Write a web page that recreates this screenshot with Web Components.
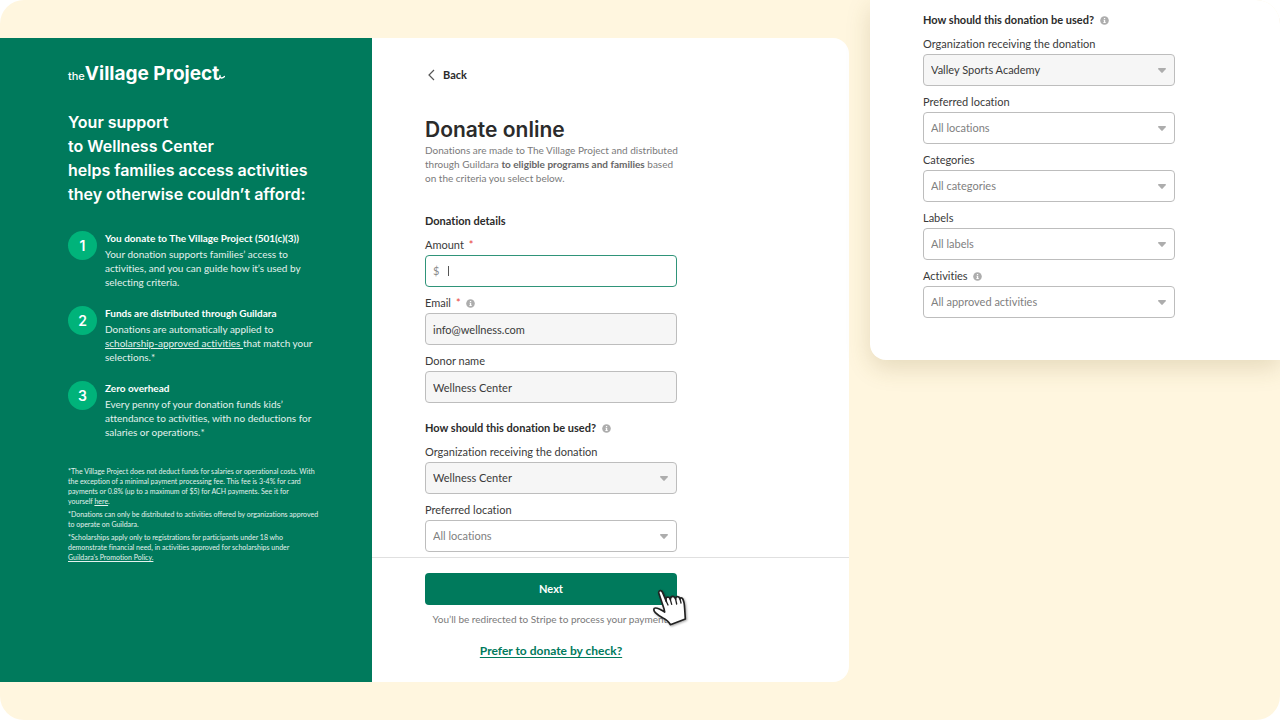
<!DOCTYPE html>
<html lang="en">
<head>
<meta charset="utf-8">
<meta name="viewport" content="width=device-width, initial-scale=1">
<title>Donate online</title>
<style>
html { background: #fff; }
body { --display: Inter, "Open Sans", sans-serif; margin: 0; font-family: Lato, "Open Sans", sans-serif; font-variant-ligatures: none; font-size: 11px; line-height: 14px; color: #3a3a3a; }
</style>
</head>
<body>
<donation-page></donation-page>

<script>
const define = (name, html, setup) => customElements.define(name, class extends HTMLElement {
  connectedCallback() {
    if (this.shadowRoot) return;
    const t = document.createElement('template');
    t.innerHTML = html;
    this.attachShadow({ mode: 'open' }).append(t.content.cloneNode(true));
    if (setup) setup(this, this.shadowRoot);
  }
});

define('info-icon', `
<style>
:host { display: inline-flex; width: 9px; height: 9px; }
svg { display: block; width: 100%; height: 100%; }
</style>
<svg viewBox="0 0 18 18" aria-hidden="true"><circle cx="9" cy="9" r="8.6" fill="#adadad"/><path d="M7.8 4h2.6v2.2H7.8zM7 7.6h3.4v4.6h1v1.6H6.8v-1.6h1V9.2H7z" fill="#fff"/></svg>`);

define('brand-logo', `
<style>
:host { display: flex; align-items: baseline; color: #fff; font-family: var(--display); line-height: 24px; white-space: nowrap; }
small { font-size: 11px; font-weight: 500; }
b { font-size: 19px; font-weight: 700; }
svg { width: 8px; height: 6px; margin-left: -2px; }
</style>
<small>the</small><b>Village Project</b>
<svg viewBox="0 0 16 12" aria-hidden="true"><path d="M1 10Q6 10 6 3Q6 8 9 8Q12 8 15 5" fill="none" stroke="#fff" stroke-width="2.6" stroke-linecap="round" stroke-linejoin="round"/></svg>`);

define('step-item', `
<style>
:host { display: flex; gap: 8px; font-size: 10px; color: #e3f1ed; white-space: nowrap; }
.num { flex: none; width: 29px; height: 29px; border-radius: 50%; background: #00b37a; color: #fff; font-family: var(--display); font-size: 14px; line-height: 29px; font-weight: 600; text-align: center; }
h3 { margin: 0 0 2px; font-size: 10px; line-height: 14px; font-weight: 700; color: #fff; }
p { margin: 0; }
</style>
<div class="num"></div>
<div><h3><slot name="title"></slot></h3><p><slot></slot></p></div>`,
(el, r) => { r.querySelector('.num').textContent = el.getAttribute('n'); });

define('promo-panel', `
<style>
:host { display: block; box-sizing: border-box; padding: 24px 24px 24px 68px; background: #007a5c; color: #fff; }
h2 { margin: 22px 0 25px; font-family: var(--display); font-size: 16px; line-height: 24px; font-weight: 600; white-space: nowrap; }
.steps { display: grid; gap: 17px; }
.notes { display: grid; gap: 3px; margin-top: 27px; font-size: 7px; line-height: 10px; color: #e3f1ed; white-space: nowrap; }
.notes p { margin: 0; }
a { color: inherit; text-decoration: underline; }
</style>
<brand-logo></brand-logo>
<h2>Your support<br>to Wellness Center<br>helps families access activities<br>they otherwise couldn’t afford:</h2>
<div class="steps">
<step-item n="1"><span slot="title">You donate to The Village Project (501(c)(3))</span>Your donation supports families’ access to<br>activities, and you can guide how it’s used by<br>selecting criteria.</step-item>
<step-item n="2"><span slot="title">Funds are distributed through Guildara</span>Donations are automatically applied to<br><a href="#activities">scholarship-approved activities </a>that match your<br>selections.*</step-item>
<step-item n="3"><span slot="title">Zero overhead</span>Every penny of your donation funds kids’<br>attendance to activities, with no deductions for<br>salaries or operations.*</step-item>
</div>
<div class="notes">
<p>*The Village Project does not deduct funds for salaries or operational costs. With<br>the exception of a minimal payment processing fee. This fee is 3-4% for card<br>payments or 0.8% (up to a maximum of $5) for ACH payments. See it for<br>yourself <a href="#fees">here</a>.</p>
<p>*Donations can only be distributed to activities offered by organizations approved<br>to operate on Guildara.</p>
<p>*Scholarships apply only to registrations for participants under 18 who<br>demonstrate financial need, in activities approved for scholarships under<br><a href="#policy">Guildara’s Promotion Policy.</a></p>
</div>`);

const fieldCss = `
:host { display: block; }
.label { display: flex; align-items: center; gap: 5px; height: 14px; margin-bottom: 3px; white-space: nowrap; }
.req { color: #e8423a; }
.box { display: flex; align-items: center; box-sizing: border-box; height: 32px; border: 1px solid #bdbdbd; border-radius: 4px; background: #fff; }
.box.filled { background: #f6f6f6; }
.box.active { border-color: #2f9479; }
input, select { flex: 1; min-width: 0; height: 100%; box-sizing: border-box; margin: 0; padding: 0 7px; border: 0; outline: 0; background: none; appearance: none; font: inherit; color: #3a3a3a; }
`;
const labelHtml = `<div class="label"><label for="control"></label><span class="req" hidden>*</span><info-icon hidden></info-icon></div>`;
const setupLabel = (el, r) => {
  r.querySelector('label').textContent = el.getAttribute('label');
  if (!el.hasAttribute('required')) r.querySelector('.req').remove(); else r.querySelector('.req').hidden = false;
  if (!el.hasAttribute('info')) r.querySelector('info-icon').remove(); else r.querySelector('info-icon').hidden = false;
};

define('text-field', `
<style>${fieldCss}
.prefix { padding-left: 7px; color: #8a8a8a; }
.caret { width: 1px; height: 10px; margin-left: 9px; background: #555; }
</style>
${labelHtml}
<div class="box"><input id="control" type="text"></div>`,
(el, r) => {
  setupLabel(el, r);
  const box = r.querySelector('.box'), input = r.querySelector('input');
  input.value = el.getAttribute('value') || '';
  input.readOnly = el.hasAttribute('readonly');
  box.classList.toggle('filled', input.readOnly);
  if (el.hasAttribute('prefix')) {
    box.classList.add('active');
    const p = document.createElement('span'), c = document.createElement('span');
    p.className = 'prefix'; p.textContent = el.getAttribute('prefix');
    c.className = 'caret';
    input.before(p, c);
  }
});

define('select-field', `
<style>${fieldCss}
.box { display: grid; align-items: center; }
select { grid-area: 1 / 1; width: 100%; padding-right: 24px; color: #808080; }
.filled select { color: #3a3a3a; }
svg { grid-area: 1 / 1; justify-self: end; margin-right: 8px; width: 8px; height: 5px; pointer-events: none; }
</style>
${labelHtml}
<div class="box"><select id="control"><option></option></select><svg viewBox="0 0 16 10" aria-hidden="true"><path d="M1.5 0h13q2.4.6.8 2.6L9.4 9.2q-1.4 1.2-2.8 0L.7 2.6Q-.9.6 1.5 0z" fill="#adadad"/></svg></div>`,
(el, r) => {
  setupLabel(el, r);
  r.querySelector('option').textContent = el.getAttribute('value');
  r.querySelector('.box').classList.toggle('filled', el.hasAttribute('filled'));
});

define('field-group', `
<style>
:host { display: block; }
h2 { display: flex; align-items: center; gap: 6px; margin: 0 0 10px; font-size: 11px; line-height: 14px; font-weight: 700; color: #2b2b2b; white-space: nowrap; }
.fields { display: grid; gap: 9px; }
</style>
<h2><span></span></h2>
<div class="fields"><slot></slot></div>`,
(el, r) => {
  r.querySelector('span').textContent = el.getAttribute('heading');
  if (el.hasAttribute('info')) r.querySelector('h2').append(document.createElement('info-icon'));
});

define('hand-pointer', `
<style>
:host { display: block; width: 36px; height: 40px; pointer-events: none; filter: drop-shadow(1px 1px 1px rgba(0,0,0,.35)); }
svg { display: block; width: 100%; height: 100%; }
</style>
<svg viewBox="0 0 108 120" aria-hidden="true">
<path d="M20 14Q21 7 26 8Q30 9 32 14L43 40Q40 28 47 27Q53 27 55 35Q55 25 62 25Q68 25 71 34Q71 25 77 26Q82 26 84 33Q86 27 91 31Q97 40 98 62L100 93L55 110Q49 98 33 90Q18 82 10 74Q3 67 7 61Q13 56 38 72L36 62Z" fill="#fff" stroke="#222" stroke-width="5" stroke-linejoin="round"/>
<path d="M42 38l6 13M55 35l4 14M71 34l3 14M84 33l3 12" fill="none" stroke="#222" stroke-width="4" stroke-linecap="round"/>
</svg>`);

define('donate-form', `
<style>
:host { display: flex; flex-direction: column; background: #fff; }
.body { padding: 30px 24px 5px 53px; }
.body > *, .foot > * { max-width: 252px; }
.back { display: flex; align-items: center; gap: 8px; padding: 0; border: 0; background: none; font: inherit; line-height: 14px; font-weight: 700; color: #2b2b2b; }
.back svg { width: 10px; height: 12px; }
h1 { margin: 35px 0 0; font-family: var(--display); font-size: 21px; line-height: 26px; font-weight: 600; color: #2b2b2b; white-space: nowrap; }
p { margin: 0; font-size: 10px; color: #7a7a7a; white-space: nowrap; }
p b { font-weight: 700; color: #666; }
field-group { margin-top: 29px; }
field-group + field-group { margin-top: 18px; }
.foot { border-top: 1px solid #e0e0e0; padding: 15px 24px 24px 53px; text-align: center; }
.action { position: relative; }
.next { display: block; width: 100%; height: 32px; border: 0; border-radius: 4px; background: #007a5c; color: #fff; font: inherit; font-weight: 700; }
hand-pointer { position: absolute; right: -11px; top: 15px; }
.foot p { margin: 7px 0 18px; }
.foot a { color: #007a5c; font-size: 12px; font-weight: 700; text-decoration: underline; text-underline-offset: 2px; }
.alt { display: block; }
</style>
<div class="body">
<button class="back" type="button"><svg viewBox="0 0 10 12" aria-hidden="true"><path d="M9 1L4 6l5 5" fill="none" stroke="#555" stroke-width="1.2"/></svg>Back</button>
<h1>Donate online</h1>
<p>Donations are made to The Village Project and distributed<br>through Guildara <b>to eligible programs and families</b> based<br>on the criteria you select below.</p>
<field-group heading="Donation details">
<text-field label="Amount" required prefix="$"></text-field>
<text-field label="Email" required info value="info@wellness.com" readonly></text-field>
<text-field label="Donor name" value="Wellness Center" readonly></text-field>
</field-group>
<field-group heading="How should this donation be used?" info>
<select-field label="Organization receiving the donation" value="Wellness Center" filled></select-field>
<select-field label="Preferred location" value="All locations"></select-field>
</field-group>
</div>
<div class="foot">
<div class="action"><button class="next" type="button">Next</button><hand-pointer></hand-pointer></div>
<p>You’ll be redirected to Stripe to process your payment.</p>
<div class="alt"><a href="#check">Prefer to donate by check?</a></div>
</div>`);

define('usage-panel', `
<style>
:host { display: block; box-sizing: border-box; padding: 13px 24px 42px 53px; background: #fff; border-radius: 0 0 0 16px; box-shadow: 0 8px 24px rgba(110,90,30,.18); }
field-group { max-width: 252px; }
</style>
<field-group heading="How should this donation be used?" info>
<select-field label="Organization receiving the donation" value="Valley Sports Academy" filled></select-field>
<select-field label="Preferred location" value="All locations"></select-field>
<select-field label="Categories" value="All categories"></select-field>
<select-field label="Labels" value="All labels"></select-field>
<select-field label="Activities" info value="All approved activities"></select-field>
</field-group>`);

define('donation-page', `
<style>
:host { display: grid; grid-template-columns: minmax(0, 849fr) minmax(0, 410fr); gap: 21px; align-items: start; box-sizing: border-box; min-height: 100vh; padding-bottom: 38px; background: #fff6df; border-radius: 24px; overflow: hidden; }
.card { display: grid; grid-template-columns: minmax(0, 372fr) minmax(0, 477fr); margin-top: 38px; border-radius: 0 16px 16px 0; overflow: hidden; }
</style>
<main class="card"><promo-panel></promo-panel><donate-form></donate-form></main>
<usage-panel></usage-panel>`);
</script>
</body>
</html>
